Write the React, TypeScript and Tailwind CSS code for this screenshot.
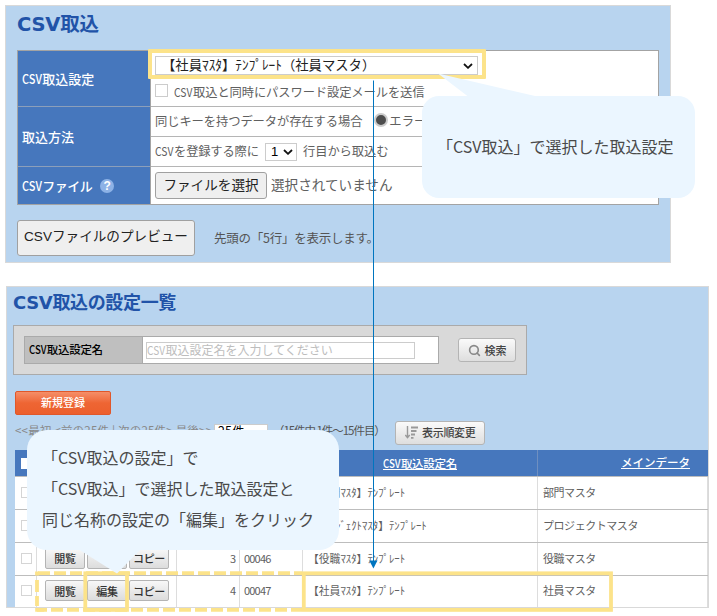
import React from 'react';
import { Search } from 'lucide-react';

interface SettingRow {
  no?: number;
  code?: string;
  name: string;
  main: string;
}

const rows: SettingRow[] = [
  { name: '【部門ﾏｽﾀ】ﾃﾝﾌﾟﾚｰﾄ', main: '部門マスタ' },
  { name: '【ﾌﾟﾛｼﾞｪｸﾄﾏｽﾀ】ﾃﾝﾌﾟﾚｰﾄ', main: 'プロジェクトマスタ' },
  { no: 3, code: '00046', name: '【役職ﾏｽﾀ】ﾃﾝﾌﾟﾚｰﾄ', main: '役職マスタ' },
  { no: 4, code: '00047', name: '【社員ﾏｽﾀ】ﾃﾝﾌﾟﾚｰﾄ', main: '社員マスタ' },
];

// Half-width latin letters inside Japanese text
function Csv() {
  return (
    <span className="inline-block w-[1.55em] whitespace-nowrap">
      <span className="inline-block origin-left scale-x-[0.84] tracking-normal">CSV</span>
    </span>
  );
}

function Chevron({ className }: { className?: string }) {
  return (
    <svg className={className} width="10" height="6" viewBox="0 0 10 6" fill="none">
      <path d="M1 1l4 3.8L9 1" stroke="#111" strokeWidth="1.8" />
    </svg>
  );
}

function SmallButton({ children }: { children: React.ReactNode }) {
  return (
    <button className="h-[21px] w-[40px] shrink-0 rounded-[2px] border border-[#b4b4b4] bg-linear-to-b from-[#f8f8f8] to-[#dcdcdc] text-[11px] leading-[16px] font-medium tracking-[-0.3px] whitespace-nowrap text-[#333]">
      {children}
    </button>
  );
}

function ImportPanel() {
  return (
    <section className="ml-[5px] h-[258px] w-[666px] border border-[#d9d9d9] bg-[#b8d4ef] pl-[11px]">
      <h1 className="h-[44px] pt-[3px] font-['DejaVu_Sans','Noto_Sans_CJK_JP',sans-serif] text-[19.5px] leading-[31px] font-bold tracking-[-0.2px] text-[#2153a8]">
        CSV取込
      </h1>
      <div className="grid h-[155px] w-[642px] grid-cols-[133px_1fr] border border-[#a3a3a3] bg-white text-[12.3px] text-[#606060]">
        <div className="grid grid-rows-[56px_60px_37px] border-r border-[#a3a3a3] bg-[#4677bd] text-[13px] font-medium text-white">
          <div className="flex items-center border-b border-[#8c9fba] pl-1">
            <span><Csv />取込設定</span>
          </div>
          <div className="flex items-center border-b border-[#8c9fba] pl-1">取込方法</div>
          <div className="flex items-center pl-1">
            <span className="tracking-[-0.5px]"><Csv />ファイル</span>
            <span className="ml-[8px] flex h-[14px] w-[14px] items-center justify-center rounded-full bg-[#8db2e6] font-['Liberation_Sans',sans-serif] text-[12px] leading-none font-bold">
              ?
            </span>
          </div>
        </div>
        <div className="grid grid-rows-[56px_30px_30px_37px] whitespace-nowrap">
          <div className="border-b border-[#b5b5b5] pl-[4px]">
            <div className="mt-[5px] flex h-[19px] w-[323px] items-center border border-[#ccc] pb-[2px] pl-[6px] text-[13.33px] text-[#222]">
              【社員ﾏｽﾀ】ﾃﾝﾌﾟﾚｰﾄ（社員マスタ）
              <Chevron className="mt-[2px] mr-[4px] ml-auto" />
            </div>
            <div className="mt-[7px] flex items-center">
              <span className="mr-[6px] mb-[3px] h-[13px] w-[13px] border border-[#ccc]" />
              <span className="leading-[20px] tracking-[-0.12px]"><Csv />取込と同時にパスワード設定メールを送信</span>
            </div>
          </div>
          <div className="flex items-center border-b border-[#b5b5b5] pl-[4px]">
            <span className="tracking-[-0.1px]">同じキーを持つデータが存在する場合</span>
            <span className="mr-[1px] mb-[3px] ml-[12px] h-[14px] w-[14px] rounded-full border-2 border-[#ccc] bg-[#4d4d4d]" />
            エラー
          </div>
          <div className="flex items-center border-b border-[#b5b5b5] pl-[4px]">
            <span className="w-[110px] tracking-[-0.2px]"><Csv />を登録する際に</span>
            <span className="flex h-[18px] w-[32px] items-center border border-[#ccc] pl-[5px] font-['Liberation_Sans',sans-serif] text-[13px] text-black">
              1
              <Chevron className="ml-[5px]" />
            </span>
            <span className="ml-[6px] tracking-[-0.1px]">行目から取込む</span>
          </div>
          <div className="flex items-center pl-[4px] text-[13.6px]">
            <button className="h-[27px] w-[112px] rounded-[3px] border border-[#a0a0a0] bg-[#efefef] pb-[3px] leading-[22px] text-[#222]">
              ファイルを選択
            </button>
            <span className="ml-[4px] pb-[2px]">選択されていません</span>
          </div>
        </div>
      </div>
      <div className="mt-[15px] flex items-center">
        <button className="h-[36px] w-[178px] rounded-[3px] border border-[#a0a0a0] bg-[#efefef] pb-[2px] font-['Liberation_Sans','Noto_Sans_CJK_JP',sans-serif] text-[13.6px] whitespace-nowrap text-[#222]">
          CSVファイルのプレビュー
        </button>
        <span className="ml-[19px] text-[12.5px] tracking-[-0.25px] text-[#555]">先頭の「5行」を表示します。</span>
      </div>
    </section>
  );
}

function SettingsPanel() {
  return (
    <section className="mt-[23px] ml-[6px] h-[322px] w-[703px] border border-[#d9d9d9] bg-[#b8d4ef] pl-[6px]">
      <h2 className="h-[38px] font-['DejaVu_Sans','Noto_Sans_CJK_JP',sans-serif] text-[18px] leading-[31px] font-bold tracking-[-0.35px] text-[#2153a8]">
        CSV取込の設定一覧
      </h2>
      <div className="flex h-[50px] w-[514px] items-center border border-[#aaa] bg-[#d9d9d9] pl-[10px]">
        <div className="flex h-[28px] w-[415px] items-center border border-[#aaa] bg-white">
          <div className="flex h-full w-[118px] items-center border-r border-[#aaa] bg-[#bfbfbf] pl-[4px] text-[11.5px] font-medium tracking-[-0.3px] text-black">
            <span><Csv />取込設定名</span>
          </div>
          <div className="ml-[3px] flex h-[17px] w-[269px] items-center border border-[#ccc] text-[12px] text-[#bdbdbd]">
            <span><Csv />取込設定名を入力してください</span>
          </div>
        </div>
        <button className="ml-[19px] flex h-[24px] w-[58px] items-center justify-center gap-[4px] rounded-[3px] border border-[#b4b4b4] bg-linear-to-b from-[#fafafa] to-[#dedede] text-[11px] font-medium text-[#444]">
          <Search className="h-[13px] w-[13px] text-[#888]" strokeWidth={3} />
          検索
        </button>
      </div>
      <button className="mt-[16px] ml-[2px] block h-[24px] w-[96px] rounded-[2px] border border-[#e0572a] bg-linear-to-b from-[#f58e68] via-[#ee6533] to-[#ec5f2d] pb-[2px] text-[11px] leading-[20px] font-medium text-white">
        新規登録
      </button>
      <div className="mt-[6px] ml-[2px] flex h-[23px] items-center text-[11.5px] whitespace-nowrap text-[#888]">
        <span className="w-[199px] pb-[3px] tracking-[0.2px]">&lt;&lt;最初 &lt;前の25件 | 次の25件&gt; 最後&gt;&gt;</span>
        <span className="flex h-[18px] w-[54px] items-center border border-[#ccc] bg-white pb-[2px] pl-[3px] text-[12.5px] text-black">
          25件
          <Chevron className="mt-[3px] ml-[11px]" />
        </span>
        <span className="ml-[5px] w-[122px] pb-[3px] tracking-[-1.05px] text-[#555]">（15件中 1件～15件目）</span>
        <button className="flex h-[24px] w-[90px] items-center rounded-[3px] border border-[#b4b4b4] bg-linear-to-b from-[#fafafa] to-[#dedede] pl-[9px] text-[11px] font-medium tracking-[-0.3px] text-[#444]">
          <svg className="mr-[4px]" width="13" height="13" viewBox="0 0 13 13" fill="none" stroke="#999">
            <path d="M2.5 0v11M0.3 9l2.2 2.6L4.7 9" strokeWidth="1.4" />
            <path d="M6 1.5h7M6 5h5.5M6 8.5h4M6 11.8h2.5" strokeWidth="1.8" />
          </svg>
          表示順変更
        </button>
      </div>
      <div className="mt-[6px] ml-[2px] w-[693px] bg-white text-[11px] text-[#606060]">
        <div className="grid h-[26px] grid-cols-[22px_140px_63px_63px_235px_170px] items-center bg-[#4677bd] text-[11.5px] font-medium whitespace-nowrap text-white">
          <span className="ml-[6px] h-[11px] w-[11px] bg-white" />
          <span />
          <span />
          <span />
          <span className="flex h-full items-center justify-center border-r border-[#6f8fc0] tracking-[-0.3px]">
            <span className="border-b border-white leading-[12px]"><Csv />取込設定名</span>
          </span>
          <span className="pl-[83px]">
            <span className="inline-block border-b border-white leading-[12px]">メインデータ</span>
          </span>
        </div>
        {rows.map((row) => (
          <div
            key={row.main}
            className="grid h-[33px] grid-cols-[22px_140px_63px_63px_235px_170px] border-t border-[#bdbdbd] pb-px whitespace-nowrap last:h-[32px] [&>div]:-mb-px [&>div]:flex [&>div]:items-center [&>div]:border-r [&>div]:border-[#ddd] [&>div]:pb-[2px]"
          >
            <div className="pl-[6px]">
              <span className="h-[11px] w-[11px] border border-[#d5d5d5]" />
            </div>
            <div className="gap-[2px] pl-[8px]">
              {row.no && (
                <>
                  <SmallButton>閲覧</SmallButton>
                  <SmallButton>{row.no === 4 && '編集'}</SmallButton>
                  <SmallButton>コピー</SmallButton>
                </>
              )}
            </div>
            <div className="justify-end pr-[3px]">{row.no}</div>
            <div className="pl-[4px] tracking-[-0.8px]">{row.code}</div>
            <div className="pl-[5px] text-[10.8px]">{row.name}</div>
            <div className="pl-[5px] tracking-[-0.45px]">{row.main}</div>
          </div>
        ))}
      </div>
    </section>
  );
}

// Arrow, highlight frames and callouts drawn over the two panels
function Annotations() {
  return (
    <>
      <div className="absolute top-[49px] left-[148px] h-[30px] w-[338px] rounded-[1px] border-4 border-[#fce38a]" />
      <svg className="absolute top-0 left-0" width="717" height="616" fill="none">
        <path d="M373.5 80.5V562" stroke="#0075bf" />
        <path d="M369.3 560.5h8.2l-4.1 8z" fill="#0075bf" />
        <path d="M438 73.5L470 98H540L535 96z" fill="#ebf6ff" />
        <path d="M302 573.2H37" stroke="#fce38a" strokeWidth="3.8" strokeDasharray="12 4" strokeDashoffset="4" />
        <path d="M302 609.8H37" stroke="#fce38a" strokeWidth="3.8" strokeDasharray="12 4" strokeDashoffset="1" />
        <path d="M37 571.5v4M37 580v12M37 596v10M35.2 609.8h9" stroke="#fce38a" strokeWidth="3.8" />
        <rect x="303.8" y="573.3" width="307.2" height="36.6" stroke="#fce38a" strokeWidth="3.8" />
        <rect x="85.3" y="573.3" width="41.7" height="36.6" stroke="#fce38a" strokeWidth="3.8" />
        <path d="M78 549L117 573.5L141 549z" fill="#ebf6ff" />
      </svg>
      <div className="absolute top-[96px] left-[422px] flex h-[102px] w-[273px] items-center rounded-[17px] bg-[#ebf6ff] pb-[2px] pl-[15px] text-[16px] whitespace-nowrap text-[#4a4a4a]">
        <span>「CSV取込」で選択した取込設定</span>
      </div>
      <div className="absolute top-[430px] left-[27px] h-[120px] w-[312px] rounded-[20px] bg-[#ebf6ff] pt-[12px] pl-[15px] text-[16px] leading-[31px] whitespace-nowrap text-[#4a4a4a]">
        <p>「CSV取込の設定」で</p>
        <p>「CSV取込」で選択した取込設定と</p>
        <p>同じ名称の設定の「編集」をクリック</p>
      </div>
    </>
  );
}

export default function App() {
  return (
    <main className="relative h-[616px] w-[717px] overflow-hidden bg-white pt-[5px] font-['Noto_Sans_CJK_JP',sans-serif]">
      <ImportPanel />
      <SettingsPanel />
      <Annotations />
    </main>
  );
}
